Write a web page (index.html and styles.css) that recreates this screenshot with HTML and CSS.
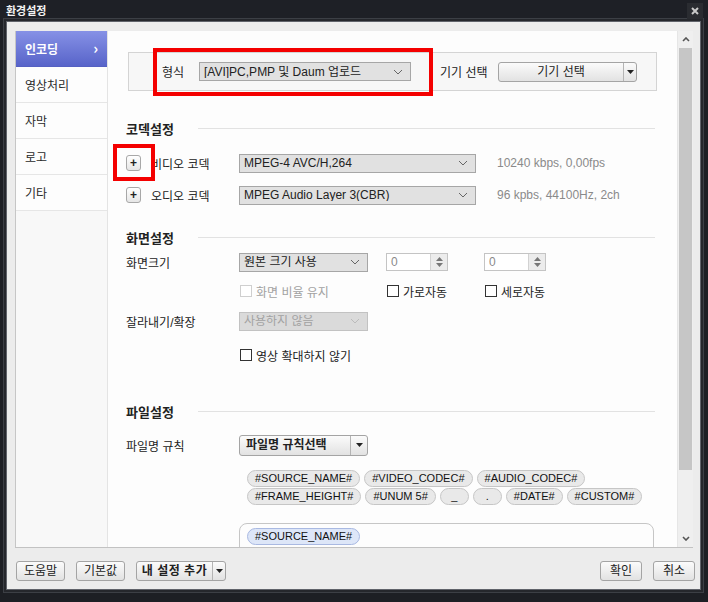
FILE: index.html
```html
<!DOCTYPE html>
<html lang="ko">
<head>
<meta charset="utf-8">
<title>환경설정</title>
<link rel="stylesheet" href="styles.css">
</head>
<body>
<div class="window">
  <div class="titlebar">
    <span class="title">환경설정</span>
    <span class="close"><svg width="8" height="8" viewBox="0 0 8 8"><path d="M1 1L7 7M7 1L1 7" stroke="#c9c9c9" stroke-width="2"/></svg></span>
  </div>
  <div class="dialog">
    <div class="body">
      <nav class="sidebar">
        <div class="nav-item active"><span>인코딩</span><span class="chev">›</span></div>
        <div class="nav-item">영상처리</div>
        <div class="nav-item">자막</div>
        <div class="nav-item">로고</div>
        <div class="nav-item">기타</div>
      </nav>
      <div class="panel">
        <div class="content">
          <div class="format-box">
            <span class="fmt-label">형식</span>
            <div class="select fmt-select"><span class="sel-text">[AVI]PC,PMP 및 Daum 업로드</span><svg class="caret" width="10" height="6" viewBox="0 0 10 6"><path d="M1 1L5 5L9 1" fill="none" stroke="#666" stroke-width="1"/></svg></div>
            <span class="dev-label">기기 선택</span>
            <div class="split-btn dev-btn"><span class="split-main">기기 선택</span><span class="split-arrow"><svg width="7" height="4" viewBox="0 0 7 4"><path d="M0 0H7L3.5 4Z" fill="#222"/></svg></span></div>
          </div>

          <div class="section-head"><span class="section-title">코덱설정</span><span class="rule"></span></div>
          <div class="row codec-row first">
            <span class="plus-btn">+</span>
            <span class="codec-label">비디오 코덱</span>
            <div class="select codec-select"><span class="sel-text">MPEG-4 AVC/H,264</span><svg class="caret" width="10" height="6" viewBox="0 0 10 6"><path d="M1 1L5 5L9 1" fill="none" stroke="#666" stroke-width="1"/></svg></div>
            <span class="info">10240 kbps, 0,00fps</span>
          </div>
          <div class="row codec-row">
            <span class="plus-btn">+</span>
            <span class="codec-label">오디오 코덱</span>
            <div class="select codec-select"><span class="sel-text">MPEG Audio Layer 3(CBR)</span><svg class="caret" width="10" height="6" viewBox="0 0 10 6"><path d="M1 1L5 5L9 1" fill="none" stroke="#666" stroke-width="1"/></svg></div>
            <span class="info">96 kpbs, 44100Hz, 2ch</span>
          </div>

          <div class="section-head screen-head"><span class="section-title">화면설정</span><span class="rule"></span></div>
          <div class="row srow row-a">
            <span class="row-label">화면크기</span>
            <div class="select size-select"><span class="sel-text">원본 크기 사용</span><svg class="caret" width="10" height="6" viewBox="0 0 10 6"><path d="M1 1L5 5L9 1" fill="none" stroke="#666" stroke-width="1"/></svg></div>
            <div class="spin spin-1"><span class="spin-val">0</span><span class="spin-btns"><svg width="7" height="4" viewBox="0 0 7 4"><path d="M0 4H7L3.5 0Z" fill="#777"/></svg><svg width="7" height="4" viewBox="0 0 7 4"><path d="M0 0H7L3.5 4Z" fill="#777"/></svg></span></div>
            <div class="spin spin-2"><span class="spin-val">0</span><span class="spin-btns"><svg width="7" height="4" viewBox="0 0 7 4"><path d="M0 4H7L3.5 0Z" fill="#777"/></svg><svg width="7" height="4" viewBox="0 0 7 4"><path d="M0 0H7L3.5 4Z" fill="#777"/></svg></span></div>
          </div>
          <div class="row srow row-b">
            <span class="check-cell cell-1"><span class="check disabled"></span><span class="check-text muted">화면 비율 유지</span></span>
            <span class="check-cell cell-2"><span class="check"></span><span class="check-text">가로자동</span></span>
            <span class="check-cell"><span class="check"></span><span class="check-text">세로자동</span></span>
          </div>
          <div class="row srow row-c">
            <span class="row-label">잘라내기/확장</span>
            <div class="select size-select disabled"><span class="sel-text">사용하지 않음</span><svg class="caret" width="10" height="6" viewBox="0 0 10 6"><path d="M1 1L5 5L9 1" fill="none" stroke="#bbb" stroke-width="1"/></svg></div>
          </div>
          <div class="row srow row-d">
            <span class="check-cell"><span class="check"></span><span class="check-text">영상 확대하지 않기</span></span>
          </div>

          <div class="section-head file-head"><span class="section-title">파일설정</span><span class="rule"></span></div>
          <div class="row srow file-row">
            <span class="row-label">파일명 규칙</span>
            <div class="split-btn rule-btn"><span class="split-main bold">파일명 규칙선택</span><span class="split-arrow"><svg width="7" height="4" viewBox="0 0 7 4"><path d="M0 0H7L3.5 4Z" fill="#222"/></svg></span></div>
          </div>
          <div class="tags">
            <div class="tag-row">
              <span class="tag">#SOURCE_NAME#</span>
              <span class="tag">#VIDEO_CODEC#</span>
              <span class="tag">#AUDIO_CODEC#</span>
            </div>
            <div class="tag-row">
              <span class="tag">#FRAME_HEIGHT#</span>
              <span class="tag">#UNUM 5#</span>
              <span class="tag tiny">_</span>
              <span class="tag tiny">.</span>
              <span class="tag">#DATE#</span>
              <span class="tag">#CUSTOM#</span>
            </div>
          </div>
          <div class="name-box">
            <span class="tag selected">#SOURCE_NAME#</span>
          </div>
        </div>
        <div class="scrollbar">
          <span class="sb-btn"><svg width="8" height="5" viewBox="0 0 8 5"><path d="M1 4L4 1L7 4" fill="none" stroke="#555" stroke-width="1.6"/></svg></span>
          <span class="sb-thumb"></span>
          <span class="sb-track"></span>
          <span class="sb-btn"><svg width="8" height="5" viewBox="0 0 8 5"><path d="M1 1L4 4L7 1" fill="none" stroke="#555" stroke-width="1.6"/></svg></span>
        </div>
      </div>
    </div>
    <div class="footer">
      <span class="btn help-btn">도움말</span>
      <span class="btn default-btn">기본값</span>
      <span class="split-btn mine-btn"><span class="split-main bold spaced">내 설정 추가</span><span class="split-arrow"><svg width="7" height="4" viewBox="0 0 7 4"><path d="M0 0H7L3.5 4Z" fill="#222"/></svg></span></span>
      <span class="spacer"></span>
      <span class="btn ok-btn">확인</span>
      <span class="btn cancel-btn">취소</span>
    </div>
  </div>
  <div class="mark mark-format"></div>
  <div class="mark mark-plus"></div>
</div>
</body>
</html>
```

FILE: styles.css
```css
* { box-sizing: border-box; }
html, body { margin: 0; padding: 0; }
body {
  width: 708px;
  height: 602px;
  background: #1d1f24;
  font-family: "Liberation Sans", "Noto Sans CJK KR", sans-serif;
  font-size: 12px;
  color: #222;
  overflow: hidden;
}
.window {
  position: relative;
  width: 708px;
  height: 602px;
  background: #1d1f24;
}
.titlebar {
  height: 21px;
  display: flex;
  align-items: center;
  justify-content: space-between;
  padding-left: 6px;
  background: #1e2026;
}
.title {
  color: #f2f2f2;
  font-family: "Noto Sans CJK KR", sans-serif;
  font-weight: bold;
  font-size: 11px;
  line-height: 1;
}
.close {
  width: 16px;
  height: 16px;
  margin-right: 5px;
  display: flex;
  align-items: center;
  justify-content: center;
  background: #2a2c31;
}
.dialog {
  margin-left: 6px;
  width: 695px;
  height: 569px;
  border: 1px solid #60636a;
  background: #ececec;
  padding: 9px 7px 0 8px;
  box-shadow: 0 0 0 2px #25272c, 0 0 0 3px #3c3f45;
}
.body {
  display: flex;
  height: 517px;
  border-bottom: 1px solid #c2c2c2;
}
.sidebar {
  width: 93px;
  background: #f8f8f8;
  border-left: 1px solid #c6c6c6;
  border-right: 1px solid #e4e4e4;
}
.nav-item {
  height: 36px;
  display: flex;
  align-items: center;
  justify-content: space-between;
  padding: 0 9px 0 9px;
  background: #fdfdfd;
  border-bottom: 1px solid #e6e6e6;
  font-family: "Noto Sans CJK KR", sans-serif;
  font-size: 12px;
  color: #2a2a2a;
}
.nav-item.active {
  background: linear-gradient(#8691e6, #5864c9);
  color: #fff;
  font-weight: bold;
  border-bottom: 1px solid #5560c2;
}
.chev { font-size: 15px; font-weight: bold; line-height: 1; margin-top: -3px; }
.panel {
  flex: 1;
  display: flex;
  background: #fdfdfd;
  overflow: hidden;
}
.content {
  flex: 1;
  padding: 21px 20px 0 18px;
  overflow: hidden;
}
.format-box {
  margin-left: 2px;
  height: 39px;
  border: 1px solid #d4d4d4;
  background: #f7f7f7;
  display: flex;
  align-items: center;
  padding-left: 33px;
}
.fmt-label { width: 37px; }
.select {
  position: relative;
  display: flex;
  align-items: center;
  height: 19px;
  background: #e1e1e1;
  border: 1px solid #a6a6a6;
  padding-left: 4px;
}
.sel-text { flex: 1; white-space: nowrap; overflow: hidden; line-height: 1; }
.caret { margin-right: 7px; flex: none; }
.fmt-select { width: 212px; }
.dev-label { margin-left: 29px; width: 58px; }
.split-btn {
  display: flex;
  height: 20px;
  border: 1px solid #a4a4a4;
  border-radius: 3px;
  background: linear-gradient(#fbfbfb, #e2e2e2);
}
.split-main {
  flex: 1;
  display: flex;
  align-items: center;
  justify-content: center;
  line-height: 1;
}
.split-arrow {
  width: 13px;
  display: flex;
  align-items: center;
  justify-content: center;
  border-left: 1px solid #b4b4b4;
}
.dev-btn { width: 139px; }
.bold { font-weight: bold; }
.spaced { letter-spacing: 0.5px; }

.section-head {
  display: flex;
  align-items: center;
  height: 16px;
  margin-top: 29px;
}
.section-title {
  width: 72px;
  font-family: "Noto Sans CJK KR", sans-serif;
  font-weight: bold;
  font-size: 13px;
}
.rule { flex: 1; height: 1px; background: #e2e2e2; margin-right: 2px; }
.row { display: flex; align-items: center; }
.codec-row { height: 32px; }
.codec-row.first { margin-top: 11px; }
.plus-btn {
  width: 15px;
  height: 16px;
  border: 1px solid #a8a8a8;
  border-radius: 3px;
  background: linear-gradient(#ffffff, #e6e6e6);
  display: flex;
  align-items: center;
  justify-content: center;
  font-weight: bold;
  font-size: 12px;
  line-height: 1;
}
.codec-label { margin-left: 10px; width: 88px; }
.codec-select { width: 237px; }
.info { margin-left: 21px; color: #8a8a8a; }

.screen-head { margin-top: 18px; }
.srow { height: 24px; }
.row-a { margin-top: 5px; }
.row-b { margin-top: 5px; padding-left: 113px; }
.row-c { margin-top: 6px; }
.row-d { margin-top: 10px; padding-left: 113px; }
.row-label { width: 113px; }
.size-select { width: 129px; }
.select.disabled { background: #dadada; border-color: #c2c2c2; color: #a2a2a2; }
.spin {
  display: flex;
  width: 62px;
  height: 18px;
  border: 1px solid #c4c4c4;
  background: #fff;
}
.spin-1 { margin-left: 18px; }
.spin-2 { margin-left: 36px; }
.spin-val { flex: 1; padding-left: 4px; color: #8a8a8a; line-height: 16px; }
.spin-btns {
  width: 17px;
  background: #ececec;
  border-left: 1px solid #d2d2d2;
  display: flex;
  flex-direction: column;
  align-items: center;
  justify-content: center;
  gap: 2px;
}
.check-cell { display: flex; align-items: center; }
.cell-1 { width: 147px; }
.cell-2 { width: 98px; }
.check {
  width: 12px;
  height: 12px;
  border: 1px solid #333;
  background: #fff;
  margin-left: 1px;
}
.check.disabled { border-color: #cfcfcf; }
.check-text { margin-left: 4px; }
.muted { color: #a2a2a2; }

.file-head { margin-top: 36px; }
.file-row { margin-top: 14px; }
.rule-btn { width: 129px; height: 21px; }
.rule-btn .split-main { justify-content: flex-start; padding-left: 6px; }
.rule-btn .split-arrow { width: 17px; }

.tags { margin-top: 13px; margin-left: 121px; }
.tag-row { display: flex; gap: 4px; margin-bottom: 1px; }
.tag {
  display: inline-flex;
  align-items: center;
  justify-content: center;
  height: 17px;
  padding: 0 7px;
  border: 1px solid #c6c6c6;
  border-radius: 9px;
  background: #e9e9e9;
  font-size: 11px;
  line-height: 1;
  color: #111;
}
.tag.tiny { width: 29px; }
.tag.selected { background: #dde6f8; border-color: #a9b9e2; }
.name-box {
  margin-top: 18px;
  margin-left: 113px;
  width: 415px;
  height: 60px;
  border: 1px solid #c6c6c6;
  border-radius: 8px 8px 0 0;
  padding: 4px 7px;
  background: #fdfdfd;
}

.scrollbar {
  width: 16px;
  display: flex;
  flex-direction: column;
  background: #efefef;
  border-left: 1px solid #e6e6e6;
}
.sb-btn {
  height: 17px;
  display: flex;
  align-items: center;
  justify-content: center;
}
.sb-thumb { height: 422px; margin: 0 1px; background: #c6c6c6; }
.sb-track { flex: 1; }

.footer {
  display: flex;
  align-items: flex-start;
  height: 41px;
  padding-top: 13px;
  margin-right: -2px;
}
.btn {
  display: flex;
  align-items: center;
  justify-content: center;
  height: 20px;
  border: 1px solid #a4a4a4;
  border-radius: 3px;
  background: linear-gradient(#fbfbfb, #e2e2e2);
  line-height: 1;
}
.help-btn { width: 49px; margin-left: 1px; }
.default-btn { width: 49px; margin-left: 11px; }
.mine-btn { width: 90px; margin-left: 11px; }
.spacer { flex: 1; }
.ok-btn { width: 42px; }
.cancel-btn { width: 42px; margin-left: 11px; }

.mark {
  position: absolute;
  border: 4px solid #f40000;
}
.mark-format { left: 153px; top: 48px; width: 280px; height: 48px; }
.mark-plus { left: 113px; top: 144px; width: 42px; height: 37px; }
```
